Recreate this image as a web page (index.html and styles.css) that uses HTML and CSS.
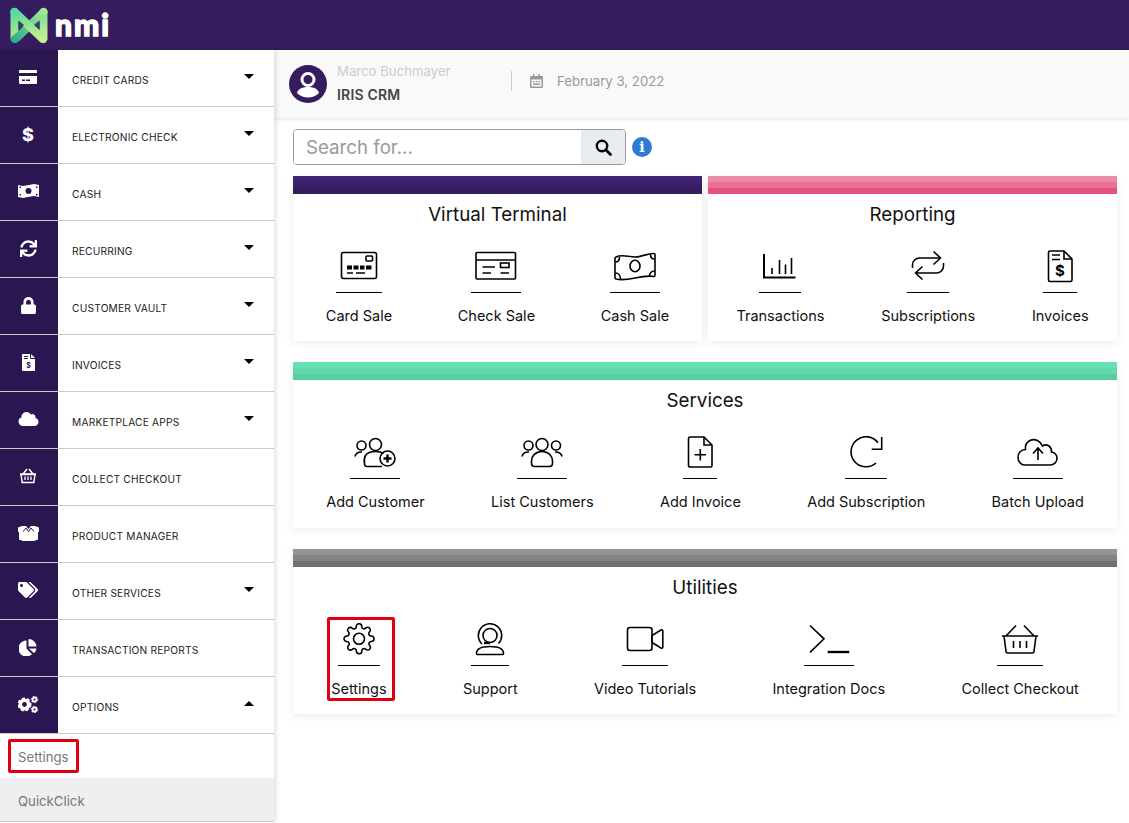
FILE: index.html
```html
<!DOCTYPE html>
<html lang="en">
  <head>
    <meta charset="UTF-8" />
    <meta name="viewport" content="width=device-width, initial-scale=1.0" />
    <title>NMI Dashboard</title>
    <link rel="stylesheet" href="styles.css">
  </head>
  <body>
    <header class="top-bar">
      <svg class="logo-mark" width="38" height="36" viewBox="0 0 38 36">
        <defs>
          <linearGradient id="logoGreen" gradientUnits="userSpaceOnUse" x1="4" y1="2" x2="14" y2="36">
            <stop offset="0" stop-color="#4fd6a4" />
            <stop offset="1" stop-color="#c9ef8c" />
          </linearGradient>
          <linearGradient id="logoGreen2" gradientUnits="userSpaceOnUse" x1="34" y1="2" x2="6" y2="34">
            <stop offset="0" stop-color="#a5ec92" />
            <stop offset="1" stop-color="#2fae8c" />
          </linearGradient>
        </defs>
        <path d="M4.5 5V31" stroke="url(#logoGreen)" stroke-width="8" stroke-linecap="round" />
        <path d="M33.5 5V31" stroke="url(#logoGreen)" stroke-width="8" stroke-linecap="round" />
        <path d="M33.5 5 L9 29 L5 32" stroke="url(#logoGreen2)" stroke-width="8" stroke-linecap="round" stroke-linejoin="round" fill="none" />
        <path d="M4.5 5 L33 32" stroke="url(#logoGreen)" stroke-width="8.5" stroke-linecap="round" />
        <path d="M8.5 13.5 L14 18 L8.5 22.5Z" fill="#2a4a5a" />
        <path d="M29.5 13.5 L24 18 L29.5 22.5Z" fill="#3d3a70" />
      </svg>
      <span class="logo-text">nmi</span>
    </header>

    <div class="layout">
      <aside class="sidebar">
        <a class="nav-item">
          <span class="nav-icon">
            <svg width="18" height="14" viewBox="0 0 18 14"><path fill="#fff" d="M1 0h16a1 1 0 0 1 1 1v2H0V1a1 1 0 0 1 1-1zM0 6h18v7a1 1 0 0 1-1 1H1a1 1 0 0 1-1-1z" /><path fill="#2a1650" d="M3 9.500h3V11H3zM7 9.500h4V11H7z" /></svg>
          </span>
          <span class="nav-label">CREDIT CARDS</span>
          <span class="caret"></span>
        </a>
        <a class="nav-item">
          <span class="nav-icon"><span class="dollar">$</span></span>
          <span class="nav-label">ELECTRONIC CHECK</span>
          <span class="caret"></span>
        </a>
        <a class="nav-item">
          <span class="nav-icon">
            <svg width="21" height="14" viewBox="0 0 21 14"><path fill="#fff" d="M0 1l5 1 6-1 5-1 5 1v12l-5-1-6 1-5 1-5-1z" /><circle cx="10.5" cy="7" r="3" fill="#2a1650" /><path fill="#2a1650" d="M1.500 2.500H3V4H1.500zM18 2.500h1.500V4H18zM1.500 10H3v1.500H1.500zM18 10h1.500v1.500H18z" /></svg>
          </span>
          <span class="nav-label">CASH</span>
          <span class="caret"></span>
        </a>
        <a class="nav-item">
          <span class="nav-icon">
            <svg width="17" height="17" viewBox="0 0 512 512"><path fill="#fff" d="M440.65 12.57l4 82.77A247.16 247.16 0 0 0 255.83 8C134.73 8 33.91 94.92 12.29 209.82A12 12 0 0 0 24.09 224h49.05a12 12 0 0 0 11.67-9.26 175.91 175.91 0 0 1 317-56.94l-101.46-4.86a12 12 0 0 0-12.57 12v47.41a12 12 0 0 0 12 12H500a12 12 0 0 0 12-12V12a12 12 0 0 0-12-12h-47.37a12 12 0 0 0-11.98 12.57zM255.83 432a175.61 175.61 0 0 1-146-77.8l101.8 4.87a12 12 0 0 0 12.57-12v-47.4a12 12 0 0 0-12-12H12a12 12 0 0 0-12 12V500a12 12 0 0 0 12 12h47.35a12 12 0 0 0 12-12.6l-4.15-82.57A247.17 247.17 0 0 0 255.83 504c121.11 0 221.93-86.92 243.55-201.82a12 12 0 0 0-11.8-14.18h-49.05a12 12 0 0 0-11.67 9.26A175.86 175.86 0 0 1 255.83 432z" /></svg>
          </span>
          <span class="nav-label">RECURRING</span>
          <span class="caret"></span>
        </a>
        <a class="nav-item">
          <span class="nav-icon">
            <svg width="15" height="17" viewBox="0 0 448 512"><path fill="#fff" d="M400 224h-24v-72C376 68.2 307.8 0 224 0S72 68.2 72 152v72H48c-26.5 0-48 21.5-48 48v192c0 26.5 21.5 48 48 48h352c26.5 0 48-21.5 48-48V272c0-26.5-21.5-48-48-48zm-104 0H152v-72c0-39.7 32.3-72 72-72s72 32.3 72 72v72z" /></svg>
          </span>
          <span class="nav-label">CUSTOMER VAULT</span>
          <span class="caret"></span>
        </a>
        <a class="nav-item">
          <span class="nav-icon">
            <svg width="13" height="17" viewBox="0 0 13 17"><path fill="#fff" d="M0 1a1 1 0 0 1 1-1h7v4a1 1 0 0 0 1 1h4v11a1 1 0 0 1-1 1H1a1 1 0 0 1-1-1zM9 0l4 4H9z" /><path fill="#2a1650" d="M2 2h4v1H2zM2 4h4v1H2z" /><text x="6.5" y="14" class="mini-dollar">$</text></svg>
          </span>
          <span class="nav-label">INVOICES</span>
          <span class="caret"></span>
        </a>
        <a class="nav-item">
          <span class="nav-icon">
            <svg width="21" height="16" viewBox="0 0 640 512"><path fill="#fff" d="M537.6 226.6c4.1-10.7 6.4-22.4 6.4-34.6 0-53-43-96-96-96-19.7 0-38.1 6-53.3 16.2C367 64.2 315.3 32 256 32c-88.4 0-160 71.6-160 160 0 2.7.1 5.4.2 8.1C40.2 219.8 0 273.2 0 336c0 79.5 64.5 144 144 144h368c70.7 0 128-57.3 128-128 0-61.9-44-113.6-102.4-125.4z" /></svg>
          </span>
          <span class="nav-label">MARKETPLACE APPS</span>
          <span class="caret"></span>
        </a>
        <a class="nav-item">
          <span class="nav-icon">
            <svg width="18" height="16" viewBox="0 0 18 16"><path d="M1 6h16M4 6l4-5M14 6l-4-5" stroke="#fff" stroke-width="1.5" fill="none" /><path d="M2 6.500l1.200 8h11.600l1.200-8z" stroke="#fff" stroke-width="1.5" fill="none" /><path d="M6 8.500V12M9 8.500V12M12 8.500V12" stroke="#fff" stroke-width="1.3" /></svg>
          </span>
          <span class="nav-label">COLLECT CHECKOUT</span>
        </a>
        <a class="nav-item">
          <span class="nav-icon">
            <svg width="21" height="15" viewBox="0 0 21 15"><path fill="#fff" d="M0 1.500L4 0h4l2.500 3L13 0h4l4 1.500V6h-1v7.500L16 15H5l-4-1.500V6H0z" /><path d="M5 5.500L8 2l2.500 3.500L13 2l3 3.500" stroke="#2a1650" stroke-width="1" fill="none" /></svg>
          </span>
          <span class="nav-label">PRODUCT MANAGER</span>
        </a>
        <a class="nav-item">
          <span class="nav-icon">
            <svg width="20" height="16" viewBox="0 0 640 512"><path fill="#fff" d="M497.941 225.941L286.059 14.059A48 48 0 0 0 252.118 0H48C21.49 0 0 21.49 0 48v204.118a48 48 0 0 0 14.059 33.941l211.882 211.882c18.744 18.745 49.136 18.746 67.882 0l204.118-204.118c18.745-18.745 18.745-49.137 0-67.882zM112 160c-26.51 0-48-21.49-48-48s21.49-48 48-48 48 21.49 48 48-21.49 48-48 48zm513.941 133.823L421.823 497.941c-18.745 18.745-49.137 18.745-67.882 0l-.36-.36L527.64 323.522c16.999-16.999 26.36-39.6 26.36-63.64s-9.362-46.641-26.36-63.64L331.397 0h48.721a48 48 0 0 1 33.941 14.059l211.882 211.882c18.745 18.745 18.745 49.137 0 67.882z" /></svg>
          </span>
          <span class="nav-label">OTHER SERVICES</span>
          <span class="caret"></span>
        </a>
        <a class="nav-item">
          <span class="nav-icon">
            <svg width="18" height="17" viewBox="0 0 18 17"><path fill="#fff" d="M7.500 1.500v8l5.500 5.700A8 8 0 1 1 7.500 1.500z" /><path fill="#fff" d="M9.500 0a8 8 0 0 1 8 7.500h-8z" /><path fill="#fff" d="M10 9.500h7.500a8 8 0 0 1-2.500 4.700z" /></svg>
          </span>
          <span class="nav-label">TRANSACTION REPORTS</span>
        </a>
        <a class="nav-item">
          <span class="nav-icon">
            <svg width="21" height="17" viewBox="0 0 21 17">
              <circle cx="6.5" cy="8.5" r="4.2" fill="none" stroke="#fff" stroke-width="3.6" />
              <circle cx="6.5" cy="8.5" r="6" fill="none" stroke="#fff" stroke-width="2" stroke-dasharray="3 2" />
              <circle cx="16.5" cy="3.5" r="2" fill="none" stroke="#fff" stroke-width="1.8" />
              <circle cx="16.5" cy="3.5" r="3.2" fill="none" stroke="#fff" stroke-width="1" stroke-dasharray="1.8 1.4" />
              <circle cx="16.5" cy="13.5" r="2" fill="none" stroke="#fff" stroke-width="1.8" />
              <circle cx="16.5" cy="13.5" r="3.2" fill="none" stroke="#fff" stroke-width="1" stroke-dasharray="1.8 1.4" />
            </svg>
          </span>
          <span class="nav-label">OPTIONS</span>
          <span class="caret caret-up"></span>
        </a>
        <a class="sub-item marked">Settings</a>
        <a class="sub-item sub-item-alt">QuickClick</a>
      </aside>

      <main class="content">
        <div class="user-bar">
          <svg class="avatar" width="38" height="38" viewBox="0 0 38 38">
            <circle cx="19" cy="19" r="19" fill="#351c5e" />
            <circle cx="19" cy="14.5" r="6" fill="none" stroke="#fff" stroke-width="3" />
            <path fill="#fff" d="M8 28c1-4 5-6 11-6s10 2 11 6c-3 3-7 4.500-11 4.500S11 31 8 28z" />
          </svg>
          <div class="user-info">
            <p class="user-name">Marco Buchmayer</p>
            <p class="user-company">IRIS CRM</p>
          </div>
          <div class="date-box">
            <svg width="13" height="14" viewBox="0 0 13 14"><path fill="#999" d="M3 0h1.500v2h4V0H10v2h2a1 1 0 0 1 1 1v10a1 1 0 0 1-1 1H1a1 1 0 0 1-1-1V3a1 1 0 0 1 1-1h2zM1.500 5.500v7h10v-7z" /><path fill="#999" d="M3 7h1.500v1.500H3zM5.800 7h1.500v1.500H5.800zM8.500 7H10v1.500H8.500zM3 9.500h7V11H3z" /></svg>
            <span>February 3, 2022</span>
          </div>
        </div>

        <div class="search-row">
          <div class="search-box">
            <input class="search-input" type="text" placeholder="Search for..." />
            <button class="search-button">
              <svg width="17" height="17" viewBox="0 0 17 17"><circle cx="7" cy="7" r="5.2" fill="none" stroke="#000" stroke-width="2.4" /><path d="M11 11l4.500 4.500" stroke="#000" stroke-width="2.8" stroke-linecap="round" /></svg>
            </button>
          </div>
          <span class="info-dot">i</span>
        </div>

        <div class="cards">
          <section class="card band-purple">
            <h2 class="card-title">Virtual Terminal</h2>
            <div class="tiles">
              <a class="tile">
                <svg class="tile-icon" width="46" height="42" viewBox="0 0 46 42">
                  <rect x="5.5" y="2.5" width="35" height="26" rx="2" />
                  <rect x="30" y="6" width="6.5" height="5" rx="1" />
                  <path class="solid" d="M11 15.500h5v4h-5zM17.500 15.500h5v4h-5zM24 15.500h4.500v4H24zM30 15.500h5.500v4H30z" />
                  <path d="M11 23h6M20 23h9" />
                </svg>
                <span class="tile-label">Card Sale</span>
              </a>
              <a class="tile">
                <svg class="tile-icon" width="50" height="42" viewBox="0 0 50 42">
                  <rect x="5" y="2.5" width="39.5" height="26.5" rx="1" />
                  <path d="M5 10h39.500M11.500 17H24M11.500 23H20M29.500 23H38" />
                  <rect x="29.5" y="13" width="8.5" height="4.5" />
                </svg>
                <span class="tile-label">Check Sale</span>
              </a>
              <a class="tile">
                <svg class="tile-icon" width="50" height="42" viewBox="0 0 50 42">
                  <path d="M6 7c6-3 12 0 19 0s13-4 19-3.500c.8 0 1 .5 1 1V25c0 1-.4 1.500-1 1.500-6-1-12 0-19 1.500s-13 2.500-19 1c-.6-.2-1-.6-1-1.200V8c0-.5.400-.8 1-1z" />
                  <ellipse cx="25" cy="16" rx="5" ry="5.8" />
                  <path d="M5.500 12c2.500 0 4-2 4-5M44.500 9c-2.500 0-4-1.500-4-4.500M5.500 23c3 0 5 2.500 5 6M44.500 21c-3 0-5 2.500-5 5.500" />
                </svg>
                <span class="tile-label">Cash Sale</span>
              </a>
            </div>
          </section>

          <section class="card band-pink">
            <h2 class="card-title">Reporting</h2>
            <div class="tiles">
              <a class="tile">
                <svg class="tile-icon" width="42" height="42" viewBox="0 0 42 42">
                  <path class="heavy" d="M5 4v23.500h31.500" />
                  <path d="M13 18v6M20.500 10v14M26.500 14.500V24M32.500 8v16" />
                </svg>
                <span class="tile-label">Transactions</span>
              </a>
              <a class="tile">
                <svg class="tile-icon" width="42" height="42" viewBox="0 0 42 42">
                  <path d="M5.500 18v-3a7 7 0 0 1 7-7H33M26.500 1.500L33.500 8l-7 6.500" />
                  <path d="M36.500 13v3a7 7 0 0 1-7 7H9M15.500 16.500L8.500 23l7 6.500" />
                </svg>
                <span class="tile-label">Subscriptions</span>
              </a>
              <a class="tile">
                <svg class="tile-icon" width="34" height="42" viewBox="0 0 34 42">
                  <path d="M7 1h14l8 8v21a1.500 1.500 0 0 1-1.500 1.500H7A1.500 1.500 0 0 1 5.500 30V2.500A1.500 1.500 0 0 1 7 1zM21 1v8h8M9 5h8M9 9.500h8" />
                  <text x="17" y="26" class="icon-dollar">$</text>
                </svg>
                <span class="tile-label">Invoices</span>
              </a>
            </div>
          </section>

          <section class="card card-wide band-green">
            <h2 class="card-title">Services</h2>
            <div class="tiles">
              <a class="tile">
                <svg class="tile-icon" width="50" height="42" viewBox="0 0 50 42">
                  <circle cx="25.5" cy="8.5" r="6" />
                  <circle cx="11.5" cy="9.5" r="4.5" />
                  <circle cx="37.5" cy="22.5" r="7.5" />
                  <path d="M33.500 17.500c-2-1.500-4.500-2-8-2-4 0-8 1-10 4-1.500 2.500-1.500 5.500-1 8.500.2 1.500 1.200 2.500 2.500 2.500h15" />
                  <path d="M5 20.500c.5-3 3-4.500 7-4.500" />
                  <path class="thick" d="M37.500 18.500v8M33.500 22.500h8" />
                </svg>
                <span class="tile-label">Add Customer</span>
              </a>
              <a class="tile">
                <svg class="tile-icon" width="50" height="42" viewBox="0 0 50 42">
                  <circle cx="25" cy="8.5" r="6" />
                  <circle cx="11.5" cy="9.5" r="4.5" />
                  <circle cx="39" cy="9.5" r="4.5" />
                  <path d="M14.500 25c0-5 4-9.500 10.500-9.500S35.500 20 35.500 25v2c0 2-1.200 3.500-3 3.500h-15c-1.800 0-3-1.500-3-3.500z" />
                  <path d="M5 20.500c.5-3 3-4.500 7-4.500M45 20.500c-.5-3-3-4.500-7-4.500" />
                </svg>
                <span class="tile-label">List Customers</span>
              </a>
              <a class="tile">
                <svg class="tile-icon" width="34" height="42" viewBox="0 0 34 42">
                  <path d="M7 1h14l8 8v20.500a1.500 1.500 0 0 1-1.500 1.500H7a1.500 1.500 0 0 1-1.500-1.500v-27A1.500 1.500 0 0 1 7 1zM21 1v8h8" />
                  <path d="M17.300 13v11.500M11.500 18.700H23" />
                </svg>
                <span class="tile-label">Add Invoice</span>
              </a>
              <a class="tile">
                <svg class="tile-icon" width="42" height="42" viewBox="0 0 42 42">
                  <path d="M33 6.700A15 15 0 1 0 31 27" />
                  <path d="M26.700 13.300h10V1" />
                </svg>
                <span class="tile-label">Add Subscription</span>
              </a>
              <a class="tile">
                <svg class="tile-icon" width="50" height="42" viewBox="0 0 50 42">
                  <path d="M11.500 29H37c4 0 7-3 7-6.500S41.500 16.500 38.500 16c.5-5-4.500-9-9-6C27.500 5 22 2 17 4.500c-4 2-5 5.500-4.500 9C8 13.500 5 17 5 21.500 5 25.500 8 29 11.500 29z" />
                  <path d="M25 24V12.500M20 17.500l5-5.500 5 5.500" />
                </svg>
                <span class="tile-label">Batch Upload</span>
              </a>
            </div>
          </section>

          <section class="card card-wide band-grey">
            <h2 class="card-title">Utilities</h2>
            <div class="tiles">
              <a class="tile marked-tile">
                <svg class="tile-icon" width="42" height="42" viewBox="0 0 42 42">
                  <circle cx="21" cy="15.7" r="5.5" />
                  <g transform="translate(4.64 -0.66) scale(1.364)" class="gear">
                    <path d="M19.400 15a1.650 1.650 0 0 0 .33 1.820l.06.06a2 2 0 0 1 0 2.830 2 2 0 0 1-2.830 0l-.06-.06a1.650 1.650 0 0 0-1.820-.33 1.650 1.650 0 0 0-1 1.510V21a2 2 0 0 1-2 2 2 2 0 0 1-2-2v-.09A1.650 1.650 0 0 0 9 19.400a1.650 1.650 0 0 0-1.820.33l-.06.06a2 2 0 0 1-2.830 0 2 2 0 0 1 0-2.830l.06-.06a1.650 1.650 0 0 0 .33-1.820 1.650 1.650 0 0 0-1.510-1H3a2 2 0 0 1-2-2 2 2 0 0 1 2-2h.09A1.650 1.650 0 0 0 4.600 9a1.650 1.650 0 0 0-.33-1.820l-.06-.06a2 2 0 0 1 0-2.830 2 2 0 0 1 2.830 0l.06.06a1.650 1.650 0 0 0 1.820.33H9a1.650 1.650 0 0 0 1-1.510V3a2 2 0 0 1 2-2 2 2 0 0 1 2 2v.09a1.650 1.650 0 0 0 1 1.510 1.650 1.650 0 0 0 1.820-.33l.06-.06a2 2 0 0 1 2.830 0 2 2 0 0 1 0 2.830l-.06.06a1.650 1.650 0 0 0-.33 1.820V9a1.650 1.650 0 0 0 1.510 1H21a2 2 0 0 1 2 2 2 2 0 0 1-2 2h-.09a1.650 1.650 0 0 0-1.510 1z" />
                  </g>
                </svg>
                <span class="tile-label">Settings</span>
              </a>
              <a class="tile">
                <svg class="tile-icon" width="38" height="42" viewBox="0 0 38 42">
                  <circle cx="19" cy="12.5" r="7" />
                  <path d="M11 21a11.700 11.700 0 1 1 16.500-.5" />
                  <path class="thick" d="M13 20h6" />
                  <path d="M5.500 30.500c0-4.500 5-7 13.500-7s13.500 2.500 13.500 7c0 .8-.5 1-1 1H6.500c-.5 0-1-.2-1-1z" />
                </svg>
                <span class="tile-label">Support</span>
              </a>
              <a class="tile">
                <svg class="tile-icon" width="46" height="42" viewBox="0 0 46 42">
                  <rect x="5.5" y="4.5" width="24.5" height="23" rx="2.5" />
                  <path d="M30 12.500l9-5.500c1-.6 1.800 0 1.800 1v16c0 1-.8 1.600-1.800 1l-9-5.500z" />
                </svg>
                <span class="tile-label">Video Tutorials</span>
              </a>
              <a class="tile">
                <svg class="tile-icon" width="50" height="42" viewBox="0 0 50 42">
                  <path d="M6 2.500L20 15.800 6 29.300" />
                  <path class="thick" d="M23.700 29h21.600" />
                </svg>
                <span class="tile-label">Integration Docs</span>
              </a>
              <a class="tile">
                <svg class="tile-icon" width="46" height="42" viewBox="0 0 46 42">
                  <path d="M5 13h36M9 13l10-10.500M37 13L27 2.500" />
                  <path d="M7 13l2 15.500c.1 1 .7 1.500 1.500 1.500h25c.8 0 1.400-.5 1.500-1.500L39 13" />
                  <path d="M16.500 18v7M23 18v7M29.500 18v7" />
                </svg>
                <span class="tile-label">Collect Checkout</span>
              </a>
            </div>
          </section>
        </div>
      </main>
    </div>
  </body>
</html>
```

FILE: styles.css
```css
* {
  box-sizing: border-box;
  margin: 0;
  padding: 0;
}
body {
  background-color: white;
  color: #111;
  font-family: Inter, "Liberation Sans", sans-serif;
  height: 823px;
  overflow: hidden;
}
.top-bar {
  background-color: #351c5e;
  height: 50px;
  display: flex;
  align-items: center;
  padding-left: 10px;
  gap: 7px;
}
.logo-text {
  color: white;
  font-family: Lato, sans-serif;
  font-size: 30px;
  font-weight: 900;
  letter-spacing: 2px;
  -webkit-text-stroke: 1.4px white;
  line-height: 1;
  margin-bottom: 3px;
}
.layout {
  display: flex;
}
.sidebar {
  width: 274px;
  flex-shrink: 0;
  height: 773px;
  box-shadow: 2px 0 5px rgba(0, 0, 0, 0.12);
  position: relative;
  background-color: white;
}
.nav-item {
  display: flex;
  align-items: center;
  height: 57px;
  border-bottom: 1px solid #ccc;
}
.nav-icon {
  background-color: #2a1650;
  width: 58px;
  height: 100%;
  flex-shrink: 0;
  display: flex;
  align-items: center;
  justify-content: center;
  padding: 0 2px 2px 0;
}
.dollar {
  color: white;
  font-size: 18px;
  font-weight: 800;
}
.mini-dollar {
  fill: #2a1650;
  font-size: 7px;
  font-weight: 700;
  text-anchor: middle;
}
.nav-label {
  font-size: 10.2px;
  color: #222;
  margin-left: 14px;
  padding-top: 4px;
  letter-spacing: 0.2px;
}
.caret {
  margin-left: auto;
  margin-right: 20px;
  margin-bottom: 3px;
  border-left: 5px solid transparent;
  border-right: 5px solid transparent;
  border-top: 5px solid black;
}
.caret-up {
  border-top: none;
  border-bottom: 5px solid black;
}
.sub-item {
  display: flex;
  align-items: center;
  height: 44px;
  padding: 2px 0 0 18px;
  font-size: 13.2px;
  color: #777;
}
.sub-item-alt {
  background-color: #efefef;
  border-bottom: 1px solid #ccc;
}
.marked {
  position: relative;
}
.marked::after {
  content: "";
  position: absolute;
  left: 8px;
  top: 5px;
  width: 65px;
  height: 28px;
  border: 3px solid #e0000f;
  border-radius: 2px;
}
.content {
  flex: 1;
}
.user-bar {
  background-color: #f9f9f9;
  height: 68px;
  display: flex;
  align-items: center;
  padding-left: 15px;
  box-shadow: 0 1px 4px rgba(0, 0, 0, 0.12);
}
.user-info {
  margin: 0 0 3px 10px;
  width: 174px;
}
.user-name {
  color: #ccc;
  font-size: 13.2px;
  margin-bottom: 7px;
}
.user-company {
  color: #444;
  font-size: 14px;
  font-weight: 600;
  letter-spacing: 0.2px;
}
.date-box {
  display: flex;
  align-items: center;
  gap: 14px;
  height: 20px;
  margin-bottom: 6px;
  padding-left: 18px;
  border-left: 1px solid #ccc;
  color: #999;
  font-size: 13.2px;
}
.search-row {
  display: flex;
  align-items: center;
  gap: 6px;
  margin: 11px 0 11px 19px;
}
.search-box {
  display: flex;
  width: 333px;
  height: 36px;
  border: 1px solid #999;
  border-radius: 4px;
  overflow: hidden;
}
.search-input {
  flex: 1;
  min-width: 0;
  border: none;
  padding-left: 12px;
  font-family: Inter, sans-serif;
  font-size: 18.7px;
  color: #999;
}
.search-input::placeholder {
  color: #999;
}
.search-button {
  width: 44px;
  background-color: #e9ecef;
  border: none;
  display: flex;
  align-items: center;
  justify-content: center;
}
.info-dot {
  width: 20px;
  height: 20px;
  border-radius: 50%;
  background-color: #2d7bd4;
  color: white;
  font-family: "DejaVu Serif", serif;
  font-size: 14px;
  font-weight: 700;
  display: flex;
  align-items: center;
  justify-content: center;
}
.cards {
  display: grid;
  grid-template-columns: 409px 409px;
  column-gap: 6px;
  row-gap: 21px;
  margin-left: 19px;
  width: 824px;
}
.card {
  background-color: white;
  box-shadow: 0 2px 8px rgba(0, 0, 0, 0.08);
  height: 165px;
}
.card::before {
  content: "";
  display: block;
  height: 18px;
}
.card-wide {
  grid-column: span 2;
}
.band-purple::before {
  background: linear-gradient(#412272 33%, #3b1f69 33% 66%, #351c5e 66%);
}
.band-pink::before {
  background: linear-gradient(#ec8aa8 33%, #ea7096 33% 66%, #e5517e 66%);
}
.band-green {
  height: 166px;
}
.band-green::before {
  background: linear-gradient(#66e0b0 33%, #62d9aa 33% 66%, #58cd9f 66%);
}
.band-grey::before {
  background: linear-gradient(#949494 33%, #848484 33% 66%, #6f6f6f 66%);
}
.card-title {
  font-size: 18.8px;
  font-weight: 400;
  text-align: center;
  line-height: 24px;
  padding-top: 9px;
}
.tiles {
  display: flex;
  justify-content: space-around;
  margin-top: 23px;
}
.tile {
  display: flex;
  flex-direction: column;
  align-items: center;
  position: relative;
}
.marked-tile::after {
  content: "";
  position: absolute;
  left: -4px;
  right: -8px;
  top: -6px;
  bottom: -3px;
  border: 3px solid #e0000f;
  border-radius: 2px;
}
.tile-icon {
  display: block;
  border-bottom: 1px solid black;
  fill: none;
  stroke: black;
  stroke-width: 1.6;
  box-sizing: content-box;
  overflow: hidden;
}
.tile-icon .solid {
  fill: black;
  stroke: none;
}
.tile-icon .heavy {
  stroke-width: 2;
}
.tile-icon .thick {
  stroke-width: 2.4;
}
.tile-icon .gear {
  stroke-width: 1.15;
}
.icon-dollar {
  fill: black;
  stroke: none;
  font-size: 15px;
  font-weight: 700;
  text-anchor: middle;
}
.tile-label {
  font-size: 14.5px;
  margin-top: 14px;
  line-height: 18px;
  white-space: nowrap;
}
```
